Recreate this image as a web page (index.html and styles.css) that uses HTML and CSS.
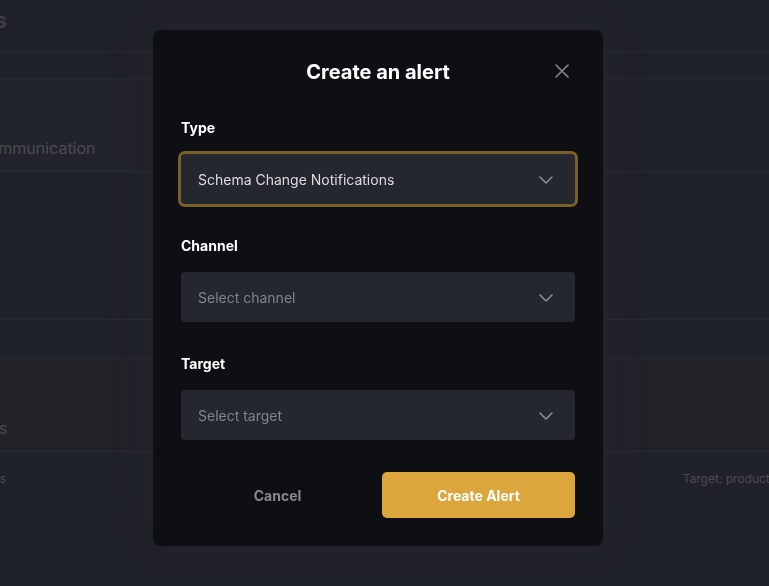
FILE: index.html
```html
<!DOCTYPE html>
<html lang="en">
<head>
<meta charset="utf-8">
<title>Create an alert</title>
<link rel="stylesheet" href="styles.css">
</head>
<body>
<div class="page">
  <header class="page-head"><h1 class="page-title">Alerts</h1></header>
  <div class="tabs-row"></div>
  <section class="card-row"><span class="card-text">Communication</span></section>
  <section class="blank-row"></section>
  <div class="thin-row"></div>
  <section class="group-row"><span class="group-text">Notifications</span></section>
  <div class="item-row">
    <span class="item-text">Alerts</span>
    <span class="item-target">Target: production</span>
  </div>
</div>

<div class="overlay">
  <div class="modal" role="dialog" aria-labelledby="modal-title">
    <div class="modal-head">
      <h2 id="modal-title" class="modal-title">Create an alert</h2>
      <button class="close-btn" aria-label="Close">
        <svg width="14" height="14" viewBox="0 0 14 14"><path d="M1 1 L13 13 M13 1 L1 13" stroke="#85878e" stroke-width="1.6" stroke-linecap="round" fill="none"/></svg>
      </button>
    </div>
    <div class="form">
      <div class="field">
        <label class="label">Type</label>
        <div class="select select-focused">
          <span class="value">Schema Change Notifications</span>
          <svg class="chev" width="14" height="8" viewBox="0 0 14 8"><path d="M1 1 L7 7 L13 1" stroke="#8a8c94" stroke-width="1.6" fill="none" stroke-linecap="round" stroke-linejoin="round"/></svg>
        </div>
      </div>
      <div class="field">
        <label class="label">Channel</label>
        <div class="select">
          <span class="placeholder">Select channel</span>
          <svg class="chev" width="14" height="8" viewBox="0 0 14 8"><path d="M1 1 L7 7 L13 1" stroke="#8a8c94" stroke-width="1.6" fill="none" stroke-linecap="round" stroke-linejoin="round"/></svg>
        </div>
      </div>
      <div class="field">
        <label class="label">Target</label>
        <div class="select">
          <span class="placeholder">Select target</span>
          <svg class="chev" width="14" height="8" viewBox="0 0 14 8"><path d="M1 1 L7 7 L13 1" stroke="#8a8c94" stroke-width="1.6" fill="none" stroke-linecap="round" stroke-linejoin="round"/></svg>
        </div>
      </div>
    </div>
    <div class="actions">
      <button class="btn btn-cancel">Cancel</button>
      <button class="btn btn-primary">Create Alert</button>
    </div>
  </div>
</div>
</body>
</html>
```

FILE: styles.css
```css
* { box-sizing: border-box; }
html, body {
  margin: 0;
  padding: 0;
  height: 100%;
}
body {
  background: #202229;
  font-family: Inter, "Noto Sans", "Liberation Sans", sans-serif;
  color: #fff;
  overflow: hidden;
}

/* background page (dimmed) */
.page {
  display: flex;
  flex-direction: column;
  width: 100%;
}
.page-head {
  height: 52px;
  border-bottom: 1px solid #292b32;
  display: flex;
  align-items: center;
}
.page-title {
  margin: 0 0 12px -58px;
  font-size: 22px;
  font-weight: 700;
  color: #3b3d44;
}
.tabs-row {
  height: 27px;
  border-bottom: 1px solid #292b32;
}
.card-row {
  height: 93px;
  border-bottom: 1px solid #292b32;
  display: flex;
  align-items: flex-end;
  padding-bottom: 13px;
  background: linear-gradient(90deg, #22242b 0, #22242b 138px, #202229 138px);
}
.card-text {
  margin-left: -23px;
  font-size: 16px;
  color: #4a4c53;
}
.blank-row {
  height: 148px;
  border-bottom: 1px solid #292b32;
}
.thin-row {
  height: 39px;
  border-bottom: 1px solid #292b32;
}
.group-row {
  height: 93px;
  border-bottom: 1px solid #292b32;
  display: flex;
  align-items: flex-end;
  padding-bottom: 13px;
  background: #212329;
}
.group-text {
  margin-left: -88px;
  font-size: 16px;
  color: #4a4c53;
}
.item-row {
  height: 53px;
  display: flex;
  align-items: center;
  justify-content: space-between;
  border-bottom: 1px solid #23252c;
  font-size: 12px;
  color: #4a4c53;
}
.item-text { margin-left: -27px; }
.item-target { margin-right: -18px; }

/* overlay + modal */
.overlay {
  position: fixed;
  inset: 0;
  padding: 30px 0 0 153px;
}
.modal {
  width: 450px;
  background: #0e0f13;
  border-radius: 7px;
  padding: 28px;
  box-shadow: 0 0 40px rgba(40, 42, 50, 0.45);
}
.modal-head {
  position: relative;
  height: 28px;
  display: flex;
  align-items: center;
  justify-content: center;
}
.modal-title {
  margin: 0;
  font-size: 20px;
  font-weight: 700;
  line-height: 28px;
  color: #ffffff;
}
.close-btn {
  position: absolute;
  right: 6px;
  top: 6px;
  width: 14px;
  height: 14px;
  padding: 0;
  border: 0;
  background: none;
  display: flex;
}
.form {
  margin-top: 32px;
  display: flex;
  flex-direction: column;
  gap: 32px;
}
.field {
  display: flex;
  flex-direction: column;
  gap: 16px;
}
.label {
  font-size: 14px;
  font-weight: 700;
  line-height: 20px;
  color: #ffffff;
}
.select {
  height: 50px;
  background: #25272f;
  border-radius: 4px;
  padding: 0 22px 0 17px;
  display: flex;
  align-items: center;
  justify-content: space-between;
  font-size: 14px;
}
.select-focused {
  box-shadow: 0 0 0 3px #7b5f27;
}
.value { color: #dcdde0; }
.placeholder { color: #80838c; }
.chev { display: block; margin-top: 1px; }

.actions {
  margin-top: 32px;
  display: grid;
  grid-template-columns: 1fr 1fr;
  gap: 8px;
}
.btn {
  height: 46px;
  border: 0;
  border-radius: 5px;
  font-family: inherit;
  font-size: 14px;
  font-weight: 700;
}
.btn-cancel {
  background: transparent;
  color: #878990;
}
.btn-primary {
  background: #dca63c;
  color: #ffffff;
}
```
